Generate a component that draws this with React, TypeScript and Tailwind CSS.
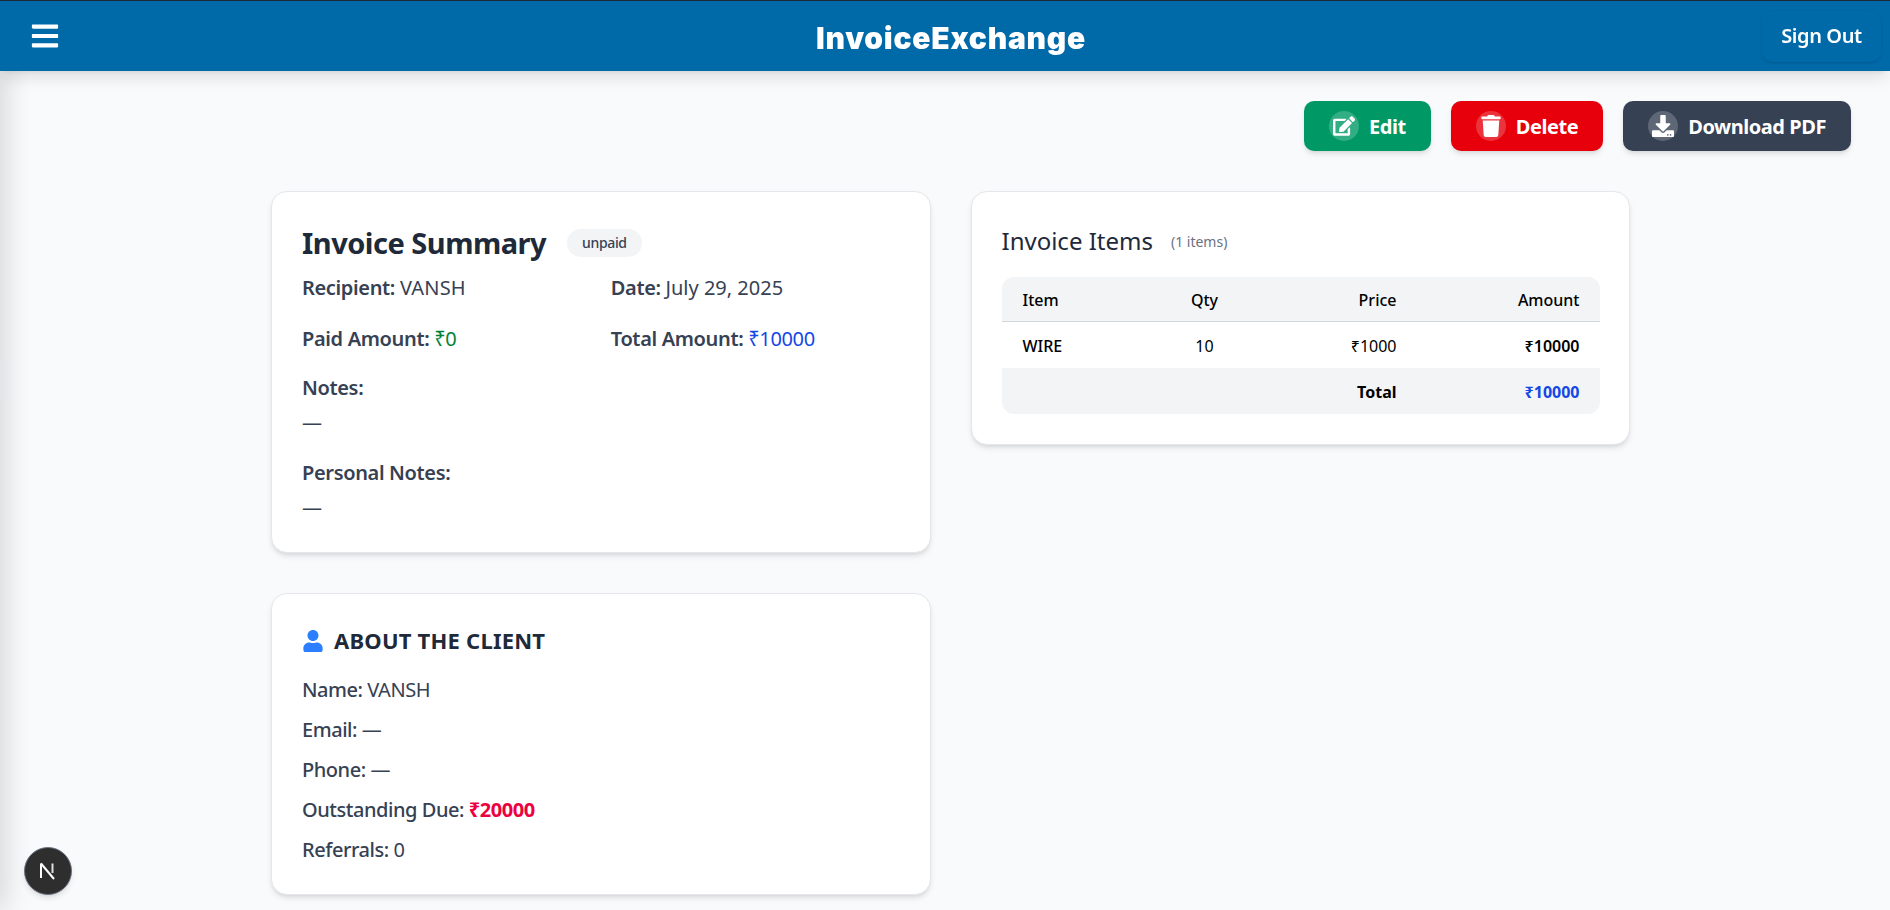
import { FaBars, FaEdit, FaTrash, FaDownload, FaUser } from "react-icons/fa";

function ActionButton({ color, icon, label }: { color: string; icon: React.ReactNode; label: string }) {
  return (
    <button className={`flex h-[50px] items-center gap-[10px] rounded-[10px] px-[25px] text-[20px] font-bold text-white shadow-md tracking-[-0.45px] ${color}`}>
      <span className="flex h-[30px] w-[30px] items-center justify-center rounded-full bg-white/20 text-[22px]">{icon}</span>
      <span className="pt-[2px]">{label}</span>
    </button>
  );
}

function Card({ className, children }: { className: string; children: React.ReactNode }) {
  return <section className={`rounded-2xl border border-gray-200 bg-white p-[30px] shadow-md ${className}`}>{children}</section>;
}

export default function App() {
  return (
    <div className="relative h-[910px] overflow-hidden bg-gray-50 font-['Noto_Sans','DejaVu_Sans',sans-serif]">
      <div className="fixed left-[-16px] top-0 h-full w-[16px] bg-white shadow-[0_0_30px_rgba(0,0,0,0.25)]" />
      <div className="fixed left-0 top-[360px] h-[40px] w-[1px] bg-gray-200" />
      <header className="relative flex h-[71px] items-center justify-between border-t border-gray-800 bg-sky-700 pl-[30px] pr-[9px] shadow-lg">
        <FaBars className="text-[30px] text-white" />
        <h1 className="absolute left-[816px] top-[19px] font-['Inter',sans-serif] text-[30px] font-black leading-[36px] tracking-[0.75px] text-white">InvoiceExchange</h1>
        <button className="flex h-[51px] w-[119px] items-center justify-center rounded-[10px] bg-sky-700 text-[20px] font-semibold tracking-[-0.4px] text-white shadow-sm">Sign Out</button>
      </header>

      <div className="flex justify-end gap-[20px] pr-[39px] pt-[30px]">
        <ActionButton color="bg-emerald-600" icon={<FaEdit />} label="Edit" />
        <ActionButton color="bg-red-600" icon={<FaTrash />} label="Delete" />
        <ActionButton color="bg-gray-700" icon={<FaDownload />} label="Download PDF" />
      </div>

      <main className="ml-[271px] mt-[40px] grid w-[1359px] grid-cols-2 items-start gap-x-[40px]">
        <div className="flex flex-col gap-[40px]">
          <Card className="h-[362px] text-[20px] tracking-[-0.35px] text-gray-700">
            <div className="flex items-center gap-[21px]">
              <h2 className="text-[29px] font-bold leading-[42px] tracking-[-0.5px] text-gray-800">Invoice Summary</h2>
              <span className="rounded-full bg-gray-100 px-[15px] py-[4px] text-[14px] font-medium leading-[20px] text-gray-700">unpaid</span>
            </div>
            <div className="mt-[10px] grid grid-cols-2 gap-x-[20px] gap-y-[24px] leading-[27px]">
              <p><b className="font-semibold">Recipient:</b> <span className="tracking-[0.2px]">VANSH</span></p>
              <p><b className="font-semibold">Date:</b> <span className="tracking-[0px]">July 29, 2025</span></p>
              <p><b className="font-semibold">Paid Amount:</b> <span className="text-green-700">₹0</span></p>
              <p><b className="font-semibold">Total Amount:</b> <span className="text-blue-700">₹10000</span></p>
            </div>
            <p className="mt-[22px] font-semibold leading-[27px]">Notes:</p>
            <p className="mt-[8px] leading-[27px]">—</p>
            <p className="mt-[23px] font-semibold leading-[27px]">Personal Notes:</p>
            <p className="mt-[8px] leading-[27px]">—</p>
          </Card>

          <Card className="h-[302px] text-[20px] tracking-[-0.45px] text-gray-700">
            <div className="flex items-center gap-[10px]">
              <FaUser className="text-[22px] text-blue-500" />
              <h3 className="text-[22px] font-bold leading-[33px] tracking-[0.22px] text-gray-800">ABOUT THE CLIENT</h3>
            </div>
            <div className="mt-[19px] flex flex-col gap-[13px] leading-[27px]">
              <p><span className="font-medium">Name:</span> VANSH</p>
              <p><span className="font-medium">Email:</span> —</p>
              <p><span className="font-medium">Phone:</span> —</p>
              <p><span className="font-medium">Outstanding Due:</span> <b className="font-bold text-rose-600">₹20000</b></p>
              <p><span className="font-medium">Referrals:</span> 0</p>
            </div>
          </Card>
        </div>

        <Card className="h-[254px]">
          <div className="flex items-center gap-[18px] pt-[1px]">
            <h2 className="text-[24px] leading-[36px] text-gray-800">Invoice Items</h2>
            <span className="text-[14px] text-gray-500">(1 items)</span>
          </div>
          <table className="mt-[18px] w-[598px] table-fixed border-separate border-spacing-0 text-[16px] leading-[24px] text-black">
            <colgroup>
              <col className="w-[140px]" />
              <col className="w-[126px]" />
              <col className="w-[149px]" />
              <col className="w-[183px]" />
            </colgroup>
            <thead>
              <tr className="h-[45px] font-medium">
                <th className="rounded-tl-xl border-b border-gray-300 bg-gray-100 pl-[21px] pt-[2px] text-left font-medium">Item</th>
                <th className="border-b border-gray-300 bg-gray-100 pt-[2px] text-center font-medium">Qty</th>
                <th className="border-b border-gray-300 bg-gray-100 pr-[20px] pt-[2px] text-right font-medium">Price</th>
                <th className="rounded-tr-xl border-b border-gray-300 bg-gray-100 pr-[20px] pt-[2px] text-right font-medium">Amount</th>
              </tr>
            </thead>
            <tbody>
              <tr className="h-[46px]">
                <td className="pl-[21px] pt-[2px] font-medium">WIRE</td>
                <td className="pt-[2px] text-center">10</td>
                <td className="pr-[20px] pt-[2px] text-right">₹1000</td>
                <td className="pr-[20px] pt-[2px] text-right font-semibold">₹10000</td>
              </tr>
              <tr className="h-[46px]">
                <td className="rounded-bl-xl bg-gray-100" />
                <td className="bg-gray-100" />
                <td className="bg-gray-100 pr-[20px] pt-[2px] text-right font-bold">Total</td>
                <td className="rounded-br-xl bg-gray-100 pr-[20px] pt-[2px] text-right font-bold text-blue-700">₹10000</td>
              </tr>
            </tbody>
          </table>
        </Card>
      </main>

      <div className="fixed bottom-[15px] left-[24px] flex h-[48px] w-[48px] items-center justify-center rounded-full border border-gray-500 bg-[#2e2e2e] shadow-md">
        <svg width="20" height="20" viewBox="0 0 20 20" fill="none">
          <path d="M3 2.5V17" stroke="#fff" strokeWidth="2" />
          <path d="M3 2.5L16 18" stroke="#fff" strokeWidth="2" />
          <path d="M14.5 2.5V12" stroke="#ddd" strokeWidth="2" />
        </svg>
      </div>
    </div>
  );
}
